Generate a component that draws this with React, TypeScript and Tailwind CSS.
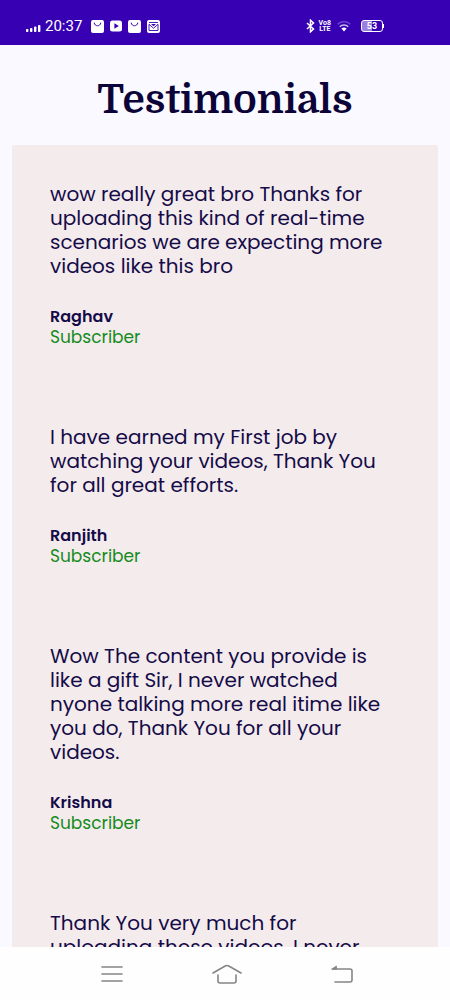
import React from 'react';

const testimonials = [
  {
    name: 'Raghav',
    role: 'Subscriber',
    text: 'wow really great bro Thanks for uploading this kind of real-time scenarios we are expecting more videos like this bro',
  },
  {
    name: 'Ranjith',
    role: 'Subscriber',
    text: 'I have earned my First job by watching your videos, Thank You for all great efforts.',
  },
  {
    name: 'Krishna',
    role: 'Subscriber',
    text: 'Wow The content you provide is like a gift Sir, I never watched nyone talking more real itime like you do, Thank You for all your videos.',
  },
  {
    name: '',
    role: '',
    text: 'Thank You very much for uploading these videos, I never',
  },
];

const BagIcon = () => (
  <svg width="13" height="13" viewBox="0 0 13 13" aria-hidden="true">
    <rect width="13" height="13" rx="2" fill="#fff" />
    <path d="M3.2 2.6c.3 4.2 6.3 4.2 6.6 0" fill="none" stroke="#3700b3" strokeWidth="1" />
  </svg>
);

const PlayIcon = () => (
  <svg width="12" height="12" viewBox="0 0 12 12" aria-hidden="true">
    <rect y="0.5" width="12" height="11" rx="2.5" fill="#fff" />
    <path d="M4.4 3.3v5.4L8.8 6z" fill="#3700b3" />
  </svg>
);

const MailIcon = () => (
  <svg width="13" height="13" viewBox="0 0 13 13" aria-hidden="true">
    <rect width="13" height="13" rx="2" fill="#fff" />
    <path d="M2 2.5h9M2 4.3v6.2h9V4.3L6.5 8.2z" fill="none" stroke="#3700b3" strokeWidth="0.9" />
    <path d="M4 4h5L6.5 6.3z" fill="#3700b3" />
  </svg>
);

const StatusBar = () => (
  <header className="flex h-[45px] shrink-0 items-end justify-between bg-[#3700b3] pb-[9px] pl-[26px] pr-[66px] text-white">
    <div className="flex h-5 items-center">
      <svg width="15" height="8" viewBox="0 0 15 8" fill="#fff" className="mr-1 mt-1" aria-hidden="true">
        <rect x="0" y="5" width="2.4" height="3" rx="0.8" />
        <rect x="4" y="4" width="2.4" height="4" rx="0.8" />
        <rect x="8" y="2.5" width="2.4" height="5.5" rx="0.8" />
        <rect x="12" y="1" width="2.4" height="7" rx="0.8" />
      </svg>
      <span className="mr-[9px] font-[Roboto,sans-serif] text-[15px] leading-5">20:37</span>
      <div className="flex items-center gap-1.5">
        <BagIcon />
        <PlayIcon />
        <BagIcon />
        <MailIcon />
      </div>
    </div>
    <div className="flex h-5 items-center">
      <svg width="9" height="14" viewBox="0 0 9 14" fill="none" stroke="#fff" strokeWidth="1.5" aria-hidden="true">
        <path d="M1 4l6.5 6L4.5 12.8V1.2L7.5 4 1 10" />
      </svg>
      <span className="ml-1 flex flex-col items-center font-[Roboto,sans-serif] text-[7px] font-bold leading-[6px]">
        <span>Vo8</span>
        <span>LTE</span>
      </span>
      <svg width="14" height="12" viewBox="0 0 14 12" fill="none" strokeWidth="1.6" className="ml-1.5" aria-hidden="true">
        <path d="M0.7 4.2a9 9 0 0 1 12.6 0" stroke="#6a40cc" />
        <path d="M2.8 6.7a6 6 0 0 1 8.4 0" stroke="#cdbff0" />
        <path d="M4.4 8.6a4 4 0 0 1 5.2 0L7 11.6z" fill="#fff" />
      </svg>
      <span className="ml-2.5 flex items-center">
        <span className="flex h-3 w-[22px] items-center justify-center rounded-[3px] border border-white bg-linear-to-r from-[#9b80e0] from-50% to-[#3700b3] to-50% font-[Roboto,sans-serif] text-[9px] font-bold leading-none">
          53
        </span>
        <span className="h-1 w-px bg-white" />
      </span>
    </div>
  </header>
);

const NavBar = () => (
  <nav className="flex h-[53px] shrink-0 items-center justify-between bg-[#fefefe] pl-[101px] pr-[97px]">
    <button type="button" aria-label="Recent apps">
      <svg width="22" height="18" viewBox="0 0 22 18" fill="none" stroke="#858585" strokeWidth="1.6" strokeLinecap="round">
        <path d="M1 2h20M1 9h20M1 16h20" />
      </svg>
    </button>
    <button type="button" aria-label="Home">
      <svg width="30" height="20" viewBox="0 0 30 20" fill="none" stroke="#858585" strokeWidth="1.6" strokeLinecap="round">
        <path d="M1 9L13.2 2q1.8-1 3.6 0L29 9" />
        <path d="M6 11v6q0 2 2 2h14q2 0 2-2v-6" />
      </svg>
    </button>
    <button type="button" aria-label="Back">
      <svg width="22" height="18" viewBox="0 0 22 18" fill="none" stroke="#858585" strokeWidth="1.6" strokeLinecap="round">
        <path d="M2 4h17q2 0 2 2v9q0 2-2 2H4" />
        <path d="M0.8 4L5.5 1v3z" fill="#858585" strokeWidth="0.8" />
      </svg>
    </button>
  </nav>
);

const App = () => {
  return (
    <div className="flex h-screen flex-col bg-[#f9f9ff] font-[Poppins,Inter,sans-serif] text-[#150b48]">
      <StatusBar />
      <main className="min-h-0 flex-1 overflow-hidden px-3">
        <h1 className="pb-[22px] pt-[33px] text-center font-[Domine,'DejaVu_Serif_Condensed','DejaVu_Serif',serif] text-[40px] font-bold leading-[45px] text-[#0c0438]">
          Testimonials
        </h1>
        <section className="flex flex-col gap-[77px] rounded-xs bg-[#f4ebed] px-[38px] pt-[37px]">
          {testimonials.map((item, index) => (
            <article key={index}>
              <p className="text-[20px] leading-6">{item.text}</p>
              {item.name && (
                <div className="mt-7 leading-[21px]">
                  <h2 className="text-[16px] font-semibold text-[#150b48]">{item.name}</h2>
                  <p className="text-[17px] text-[#148c1c]">{item.role}</p>
                </div>
              )}
            </article>
          ))}
        </section>
      </main>
      <NavBar />
    </div>
  );
};

export default App;
